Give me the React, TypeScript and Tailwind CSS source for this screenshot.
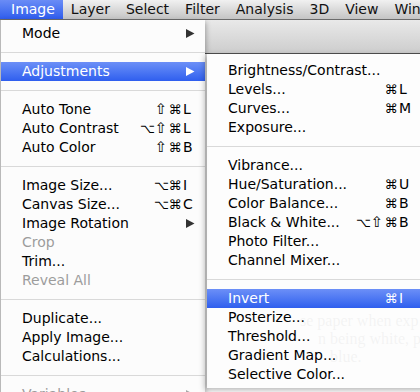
import type { ReactNode } from "react";

type Item =
	| { sep: true }
	| {
			sep?: false;
			label: string;
			mods?: string[];
			keyChar?: string;
			arrow?: boolean;
			disabled?: boolean;
			active?: boolean;
	  };

const imageMenu: Item[] = [
	{ label: "Mode", arrow: true },
	{ sep: true },
	{ label: "Adjustments", arrow: true, active: true },
	{ sep: true },
	{ label: "Auto Tone", mods: ["⇧", "⌘"], keyChar: "L" },
	{ label: "Auto Contrast", mods: ["⌥", "⇧", "⌘"], keyChar: "L" },
	{ label: "Auto Color", mods: ["⇧", "⌘"], keyChar: "B" },
	{ sep: true },
	{ label: "Image Size...", mods: ["⌥", "⌘"], keyChar: "I" },
	{ label: "Canvas Size...", mods: ["⌥", "⌘"], keyChar: "C" },
	{ label: "Image Rotation", arrow: true },
	{ label: "Crop", disabled: true },
	{ label: "Trim..." },
	{ label: "Reveal All", disabled: true },
	{ sep: true },
	{ label: "Duplicate..." },
	{ label: "Apply Image..." },
	{ label: "Calculations..." },
	{ sep: true },
	{ label: "Variables", arrow: true, disabled: true },
];

const adjustmentsMenu: Item[] = [
	{ label: "Brightness/Contrast..." },
	{ label: "Levels...", mods: ["⌘"], keyChar: "L" },
	{ label: "Curves...", mods: ["⌘"], keyChar: "M" },
	{ label: "Exposure..." },
	{ sep: true },
	{ label: "Vibrance..." },
	{ label: "Hue/Saturation...", mods: ["⌘"], keyChar: "U" },
	{ label: "Color Balance...", mods: ["⌘"], keyChar: "B" },
	{ label: "Black & White...", mods: ["⌥", "⇧", "⌘"], keyChar: "B" },
	{ label: "Photo Filter..." },
	{ label: "Channel Mixer..." },
	{ sep: true },
	{ label: "Invert", mods: ["⌘"], keyChar: "I", active: true },
	{ label: "Posterize..." },
	{ label: "Threshold..." },
	{ label: "Gradient Map..." },
	{ label: "Selective Color..." },
];

const menubar = ["Image", "Layer", "Select", "Filter", "Analysis", "3D", "View", "Window"];

function Arrow({ color }: { color: string }) {
	return (
		<svg width="9" height="9" viewBox="0 0 9 9" className="shrink-0">
			<polygon points="0,0 8.5,4.5 0,9" fill={color} />
		</svg>
	);
}

function MenuList({
	items,
	padLeft,
	keyCol,
}: {
	items: Item[];
	padLeft: string;
	keyCol: string;
}) {
	return (
		<>
			{items.map((item, i) => {
				if (item.sep) {
					return (
						<div key={i} className="flex h-[19px] items-center">
							<div className="h-px w-full bg-[#d9d9d9]" />
						</div>
					);
				}
				const tone = item.active
					? "bg-linear-to-b from-[#6c8ff7] to-[#2f5eee] text-white"
					: item.disabled
						? "text-[#9c9c9c]"
						: "text-black";
				let trailing: ReactNode = null;
				if (item.arrow) {
					trailing = (
						<span className="mr-[10px] flex">
							<Arrow
								color={item.active ? "#ffffff" : item.disabled ? "#a8a8a8" : "#333333"}
							/>
						</span>
					);
				} else if (item.keyChar) {
					trailing = (
						<span className="flex items-center">
							{item.mods?.map((m, j) => (
								<span
									key={j}
									className={`inline-block w-[14px] text-center ${m === "⇧" ? "text-[15px]" : "text-[13px]"}`}
								>
									{m}
								</span>
							))}
							<span className={`ml-[1px] ${keyCol}`}>{item.keyChar}</span>
						</span>
					);
				}
				return (
					<div
						key={i}
						className={`flex h-[19px] items-center leading-[19px] ${padLeft} ${tone}`}
					>
						<span className="flex-1 whitespace-nowrap">{item.label}</span>
						{trailing}
					</div>
				);
			})}
		</>
	);
}

export default function App() {
	return (
		<div className="relative h-[392px] w-[420px] overflow-hidden bg-white font-['DejaVu_Sans',sans-serif] text-[14px]">
			{/* menubar */}
			<div className="flex h-[20px] items-center overflow-hidden border-b border-[#6b6b6b] bg-linear-to-b from-[#f1f1f1] to-[#c4c4c4] pl-[3px] text-[#111]">
				{menubar.map((m) => (
					<div
						key={m}
						className={`flex h-full shrink-0 items-center whitespace-nowrap px-[8px] ${
							m === "Image" ? "-ml-[3px] pl-[11px] bg-linear-to-b from-[#6a8cf6] to-[#2f5cec] text-white" : ""
						}`}
					>
						{m}
					</div>
				))}
			</div>

			{/* options bar of the app behind the menus */}
			<div className="h-[34px] border-b border-[#4f4f4f] bg-linear-to-b from-[#e9e9e9] to-[#cdcdcd]" />

			{/* document behind */}
			<div className="flex flex-col pt-[258px] font-['Liberation_Serif',serif] text-[16px] leading-[18px] text-[#9a9a9a]">
				<p className="whitespace-nowrap pl-[300px]">se paper when exp</p>
				<p className="whitespace-nowrap pl-[318px]">n being white, pa</p>
				<p className="whitespace-nowrap pl-[330px]">blue.</p>
			</div>

			{/* Image menu */}
			<div className="absolute left-0 top-[20px] w-[205px] border-l border-[#b9b9b9] bg-[#fcfcfc] pb-[4px] pt-[4px] shadow-[1px_2px_5px_rgba(0,0,0,0.3)]">
				<MenuList items={imageMenu} padLeft="pl-[21px]" keyCol="w-[12px] mr-[10px]" />
			</div>

			{/* Adjustments submenu */}
			<div className="absolute left-[207px] top-[54px] w-[232px] bg-[#fdfdfd]/[0.9] pb-[4px] pt-[7px] shadow-[-2px_2px_6px_rgba(0,0,0,0.3)]">
				<MenuList items={adjustmentsMenu} padLeft="pl-[21px]" keyCol="w-[16px] mr-[24px]" />
			</div>
		</div>
	);
}
